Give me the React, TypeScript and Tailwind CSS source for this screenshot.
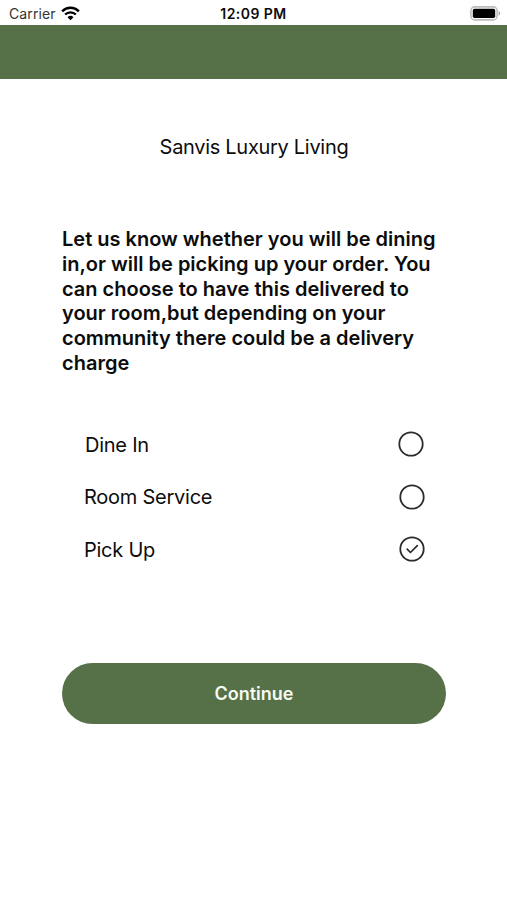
import { useState } from "react";

const options = [
  { label: "Dine In", row: "pl-[85px] pr-[83px]" },
  { label: "Room Service", row: "pl-[84px] pr-[82px]" },
  { label: "Pick Up", row: "pl-[84px] pr-[82px]" },
];

function WifiIcon() {
  return (
    <svg width="19" height="15" viewBox="0 0 19 15" fill="none" stroke="#000">
      <path d="M1.1 5.3a12 12 0 0 1 16.8 0" strokeWidth="2.5" />
      <path d="M4.1 8.5a7.7 7.7 0 0 1 10.800 0" strokeWidth="2.3" />
      <path d="M9.5 14.3 6.5 11.3a4.3 4.3 0 0 1 6 0Z" fill="#000" stroke="none" />
    </svg>
  );
}

function BatteryIcon() {
  return (
    <svg width="31" height="15" viewBox="0 0 31 15">
      <rect x="0.9" y="0.9" width="26.2" height="13" rx="4" fill="#fff" stroke="#bdbdbd" strokeWidth="1.6" />
      <rect x="2.8" y="2.8" width="22.4" height="9.2" rx="1.8" fill="#000" />
      <path d="M28.6 5c2 .7 2 4 0 4.7Z" fill="#a8a8a8" />
    </svg>
  );
}

function RadioIcon({ checked }: { checked: boolean }) {
  return (
    <svg width="26" height="26" viewBox="0 0 26 26" fill="none" stroke="#2b2b2b">
      <circle cx="13" cy="13" r="11.7" strokeWidth="1.8" />
      {checked && (
        <path d="m8.2 13.2 3.200 3.300 6.900-6.900" strokeWidth="1.7" strokeLinecap="round" strokeLinejoin="round" />
      )}
    </svg>
  );
}

export default function App() {
  const [selected, setSelected] = useState("Pick Up");

  return (
    <div className="flex h-[900px] w-[507px] flex-col overflow-hidden bg-white font-['Inter',sans-serif] text-[#0c0c0c]">
      {/* Status bar */}
      <div className="grid h-[25px] shrink-0 grid-cols-3 items-center pt-[2px]">
        <div className="flex items-center gap-[5px] pl-[9px]">
          <span className="pt-[1px] text-[14px] leading-none tracking-[0.1px] text-[#333]">Carrier</span>
          <WifiIcon />
        </div>
        <span className="pt-[1px] text-center text-[14px] leading-none font-semibold tracking-[0.45px]">12:09 PM</span>
        <div className="flex justify-end pr-[6px]">
          <BatteryIcon />
        </div>
      </div>

      <header className="h-[54px] shrink-0 bg-[#567148]" />

      <main className="flex flex-col">
        <h1 className="mt-[55px] pl-px text-center text-[20px] leading-[26px] tracking-[-0.3px]">Sanvis Luxury Living</h1>

        <p className="mt-[67px] ml-[62px] w-[384px] text-[20px] leading-[24.8px] font-semibold">
          Let us know whether you will be dining in,or will be picking up your order. You can choose to have this
          delivered to your room,but depending on your community there could be a delivery charge
        </p>

        <div className="mt-[42px] flex flex-col">
          {options.map((option) => (
            <button
              key={option.label}
              type="button"
              onClick={() => setSelected(option.label)}
              className={`flex h-[52.5px] items-center justify-between ${option.row}`}
            >
              <span className="pt-[1px] text-[20px] leading-none tracking-[-0.25px]">{option.label}</span>
              <RadioIcon checked={selected === option.label} />
            </button>
          ))}
        </div>

        <button
          type="button"
          className="mt-[87.5px] mr-[61px] ml-[62px] h-[61px] rounded-full bg-[#567148] pt-[1px] text-[18px] font-semibold text-[#f6fbf3]"
        >
          Continue
        </button>
      </main>
    </div>
  );
}
